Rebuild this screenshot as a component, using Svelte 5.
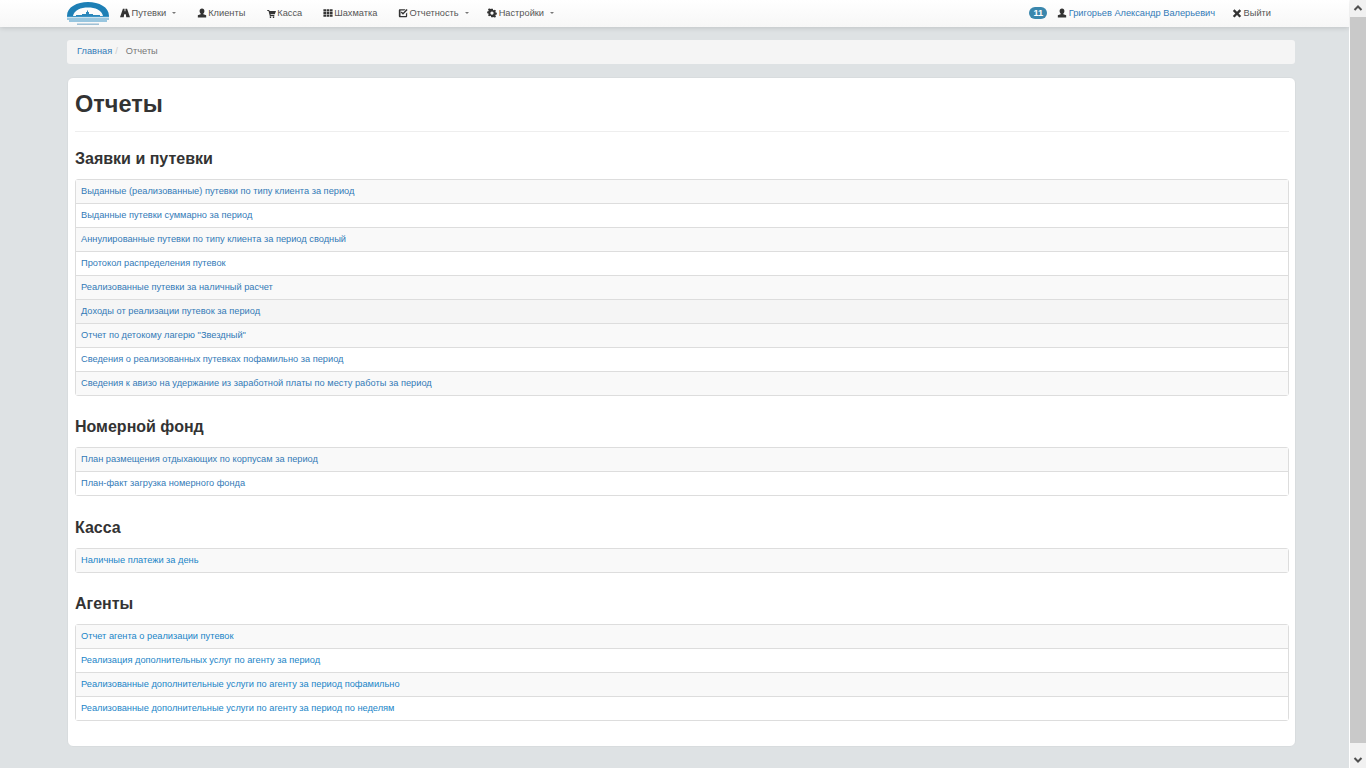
<script>
  const groups = [
    {
      title: 'Заявки и путевки',
      items: [
        { text: 'Выданные (реализованные) путевки по типу клиента за период' },
        { text: 'Выданные путевки суммарно за период' },
        { text: 'Аннулированные путевки по типу клиента за период сводный' },
        { text: 'Протокол распределения путевок' },
        { text: 'Реализованные путевки за наличный расчет' },
        { text: 'Доходы от реализации путевок за период', hover: true },
        { text: 'Отчет по детокому лагерю "Звездный"' },
        { text: 'Сведения о реализованных путевках пофамильно за период' },
        { text: 'Сведения к авизо на удержание из заработной платы по месту работы за период' }
      ]
    },
    {
      title: 'Номерной фонд',
      items: [
        { text: 'План размещения отдыхающих по корпусам за период' },
        { text: 'План-факт загрузка номерного фонда' }
      ]
    },
    {
      title: 'Касса',
      items: [{ text: 'Наличные платежи за день', fresh: true }]
    },
    {
      title: 'Агенты',
      items: [
        { text: 'Отчет агента о реализации путевок', fresh: true },
        { text: 'Реализация дополнительных услуг по агенту за период', fresh: true },
        { text: 'Реализованные дополнительные услуги по агенту за период пофамильно', fresh: true },
        { text: 'Реализованные дополнительные услуги по агенту за период по неделям', fresh: true }
      ]
    }
  ];

  const icons = {
    road: 'M3.500 1h2v3h1V1h2L12 11H7.500L7 7.500H5L4.500 11H0z',
    user: 'M6 .5c1.900 0 2.900 1.300 2.900 3 0 1.300-.5 2.400-1.300 3v1l3.400 1.300V11.500H1V8.800l3.400-1.300v-1c-.8-.6-1.300-1.700-1.300-3C3.100 1.800 4.100.5 6 .5z',
    cart: 'M1.500 2.500h2.300l.4 1.200H12L10.500 7.500H5.500l.2.800h4.300v1.200H4.600L3 3.700H1.500zM5.400 9.800a1 1 0 1 0 .01 0zM9 9.800a1 1 0 1 0 .01 0z',
    th: 'M.5 1.500h3.200v2.700H.5zM4.400 1.500h3.200v2.700H4.400zM8.300 1.500h3.200v2.700H8.300zM.5 4.700h3.200v2.600H.5zM4.400 4.700h3.200v2.600H4.400zM8.300 4.700h3.200v2.600H8.300zM.5 7.800h3.200v2.700H.5zM4.400 7.800h3.200v2.700H4.400zM8.300 7.800h3.200v2.700H8.300z',
    check: 'M2.200 1.500H9L7.500 3H3v6.500h6.500V7L11 5.500v4c0 1-.6 1.500-1.500 1.500H2.500C1.500 11 1 10.500 1 9.500v-6.500C1 2 1.500 1.500 2.200 1.500zM6 8 3.300 5.300l1.200-1.200L6 5.600 10.300 1.300l1.200 1.200z',
    cog: 'M5 1h2l.3 1.400 1 .4 1.200-.8 1.300 1.300-.8 1.200.4 1 1.400.3v2l-1.400.3-.4 1 .8 1.200-1.300 1.300-1.200-.8-1 .4L7 11H5l-.3-1.400-1-.4-1.200.8L1.200 8.700l.8-1.200-.4-1L.2 6.200v-2l1.400-.3.4-1-.8-1.200 1.300-1.300 1.200.8 1-.4zM6 4.200a1.900 1.900 0 1 0 .01 0z',
    remove: 'M3 1.500 6 4.500l3-3 2 2-3 3 3 3-2 2-3-3-3 3-2-2 3-3-3-3z'
  };
</script>

{#snippet icon(name)}
  <svg class="icon" viewBox="0 0 12 12" width="10" height="10" aria-hidden="true">
    <path d={icons[name]} fill-rule="evenodd" />
  </svg>
{/snippet}

<div class="window">
  <div class="page">
    <nav class="navbar">
      <svg class="logo" viewBox="0 0 42 25" width="42" height="25" aria-hidden="true">
        <path d="M0 15C0 6 10 1 21 1s21 5 21 14H36C35 9 28 6.500 21 6.500S7 9 6 15z" fill="#1d7fb5" />
        <path d="M9 15V14h6v-1h4v-2h1V9.500h1V11h1v2h4v1h7v1z" fill="#2a86ba" />
        <path d="M0 15h42v1.300H0zM0 17.500h42v1H0zM2 19.500h38v1H2z" fill="#3a94c6" />
        <path d="M10 23.200h22" stroke="#8fb6cf" stroke-width="1.300" />
      </svg>
      <ul class="menu">
        <li class="caret">{@render icon('road')}Путевки</li>
        <li>{@render icon('user')}Клиенты</li>
        <li>{@render icon('cart')}Касса</li>
        <li>{@render icon('th')}Шахматка</li>
        <li class="caret">{@render icon('check')}Отчетность</li>
        <li class="caret">{@render icon('cog')}Настройки</li>
      </ul>
      <div class="account">
        <span class="badge">11</span>
        <a class="person" href="#profile">{@render icon('user')}Григорьев Александр Валерьевич</a>
        <span class="logout">{@render icon('remove')}Выйти</span>
      </div>
    </nav>

    <div class="container">
      <div class="breadcrumb">
        <a href="#home">Главная</a>
        <span class="sep">/</span>
        <span class="current">Отчеты</span>
      </div>

      <main class="panel">
        <h1>Отчеты</h1>
        <hr />
        {#each groups as group}
          <h3>{group.title}</h3>
          <div class="list">
            {#each group.items as item}
              <a class="row" class:hover={item.hover} class:fresh={item.fresh} href="#report">{item.text}</a>
            {/each}
          </div>
        {/each}
      </main>
    </div>
  </div>

  <div class="scrollbar">
    <svg viewBox="0 0 16 17" width="16" height="17" aria-hidden="true"><path d="M4.500 10 8 6.500 11.500 10" fill="none" stroke="#505050" stroke-width="2" /></svg>
    <div class="thumb"></div>
    <svg viewBox="0 0 16 17" width="16" height="17" aria-hidden="true"><path d="M4.500 7 8 10.500 11.500 7" fill="none" stroke="#505050" stroke-width="2" /></svg>
  </div>
</div>

<style>
  :global(body) {
    background: #fff;
    font-family: "Liberation Sans", Arial, sans-serif;
    font-size: 9.25px;
    color: #333;
  }
  .window {
    display: flex;
    height: 768px;
    overflow: hidden;
  }
  .page {
    flex: 1;
    min-width: 0;
    background: #dee2e4;
    border-right: 1px solid #fff;
  }
  .scrollbar {
    width: 16px;
    display: flex;
    flex-direction: column;
    background: #f1f1f1;
  }
  .thumb {
    flex: 1;
    background: #c9c9c9;
    margin-bottom: 8px;
  }
  .navbar {
    height: 27px;
    box-sizing: border-box;
    display: flex;
    align-items: center;
    padding: 0 78px 2px 67px;
    background: linear-gradient(#fff, #f7f7f7);
    box-shadow: 0 1px 5px rgba(0, 0, 0, 0.14);
  }
  .logo {
    flex: none;
    margin: 2px 11px 0 0;
  }
  .menu {
    display: flex;
    list-style: none;
    margin: 0;
    padding: 0;
    gap: 20.500px;
  }
  .menu li, .logout {
    color: #555;
    display: flex;
    align-items: center;
  }
  .icon {
    fill: #333;
    margin-right: 1.500px;
    flex: none;
  }
  .caret::after {
    content: "";
    margin-left: 6px;
    border-top: 2.500px solid #777;
    border-left: 2.500px solid transparent;
    border-right: 2.500px solid transparent;
  }
  .menu .caret + .caret {
    margin-left: -2px;
  }
  .account {
    margin-left: auto;
    display: flex;
    align-items: center;
  }
  .badge {
    background: #3a87ad;
    color: #fff;
    font-weight: bold;
    border-radius: 6px;
    padding: 1px 4px;
    line-height: 10px;
    margin-right: 10px;
  }
  .person {
    color: #337ab7;
    text-decoration: none;
    margin-right: 17px;
    display: flex;
    align-items: center;
  }
  .container {
    margin: 13px 54px 0 67px;
  }
  .breadcrumb {
    height: 24px;
    box-sizing: border-box;
    display: flex;
    align-items: center;
    padding: 0 10px 3px;
    background: #f5f5f5;
    border-radius: 3px;
    margin-bottom: 13px;
  }
  .breadcrumb a {
    color: #337ab7;
    text-decoration: none;
  }
  .sep {
    color: #ccc;
    margin: 0 8px 0 3px;
  }
  .current {
    color: #777;
  }
  .panel {
    background: #fff;
    border: 1px solid #d8dcde;
    border-radius: 6px;
    padding: 10px 6px 25px 7px;
    margin-right: -1px;
    height: 670px;
    box-sizing: border-box;
  }
  h1 {
    margin: 0;
    font-size: 23.500px;
    line-height: 30px;
    padding-top: 1px;
    color: #333;
  }
  hr {
    border: 0;
    border-top: 1px solid #eee;
    margin: 12px 0 0;
  }
  h3 {
    margin: 17px 0 11px;
    font-size: 16px;
    line-height: 18px;
    color: #333;
  }
  hr + h3 {
    margin-top: 18px;
  }
  .list {
    border: 1px solid #ddd;
    border-radius: 3px;
    margin-bottom: 22.300px;
  }
  .row {
    display: block;
    height: 23px;
    line-height: 22px;
    padding: 0 5px;
    color: #337ab7;
    text-decoration: none;
    background: #fff;
    border-top: 1px solid #ddd;
  }
  .row:first-child {
    border-top: 0;
  }
  .row:nth-child(odd) {
    background: #f9f9f9;
  }
  .row.hover {
    background: #f5f5f5;
  }
  .row.fresh {
    color: #1a85c8;
  }
</style>
